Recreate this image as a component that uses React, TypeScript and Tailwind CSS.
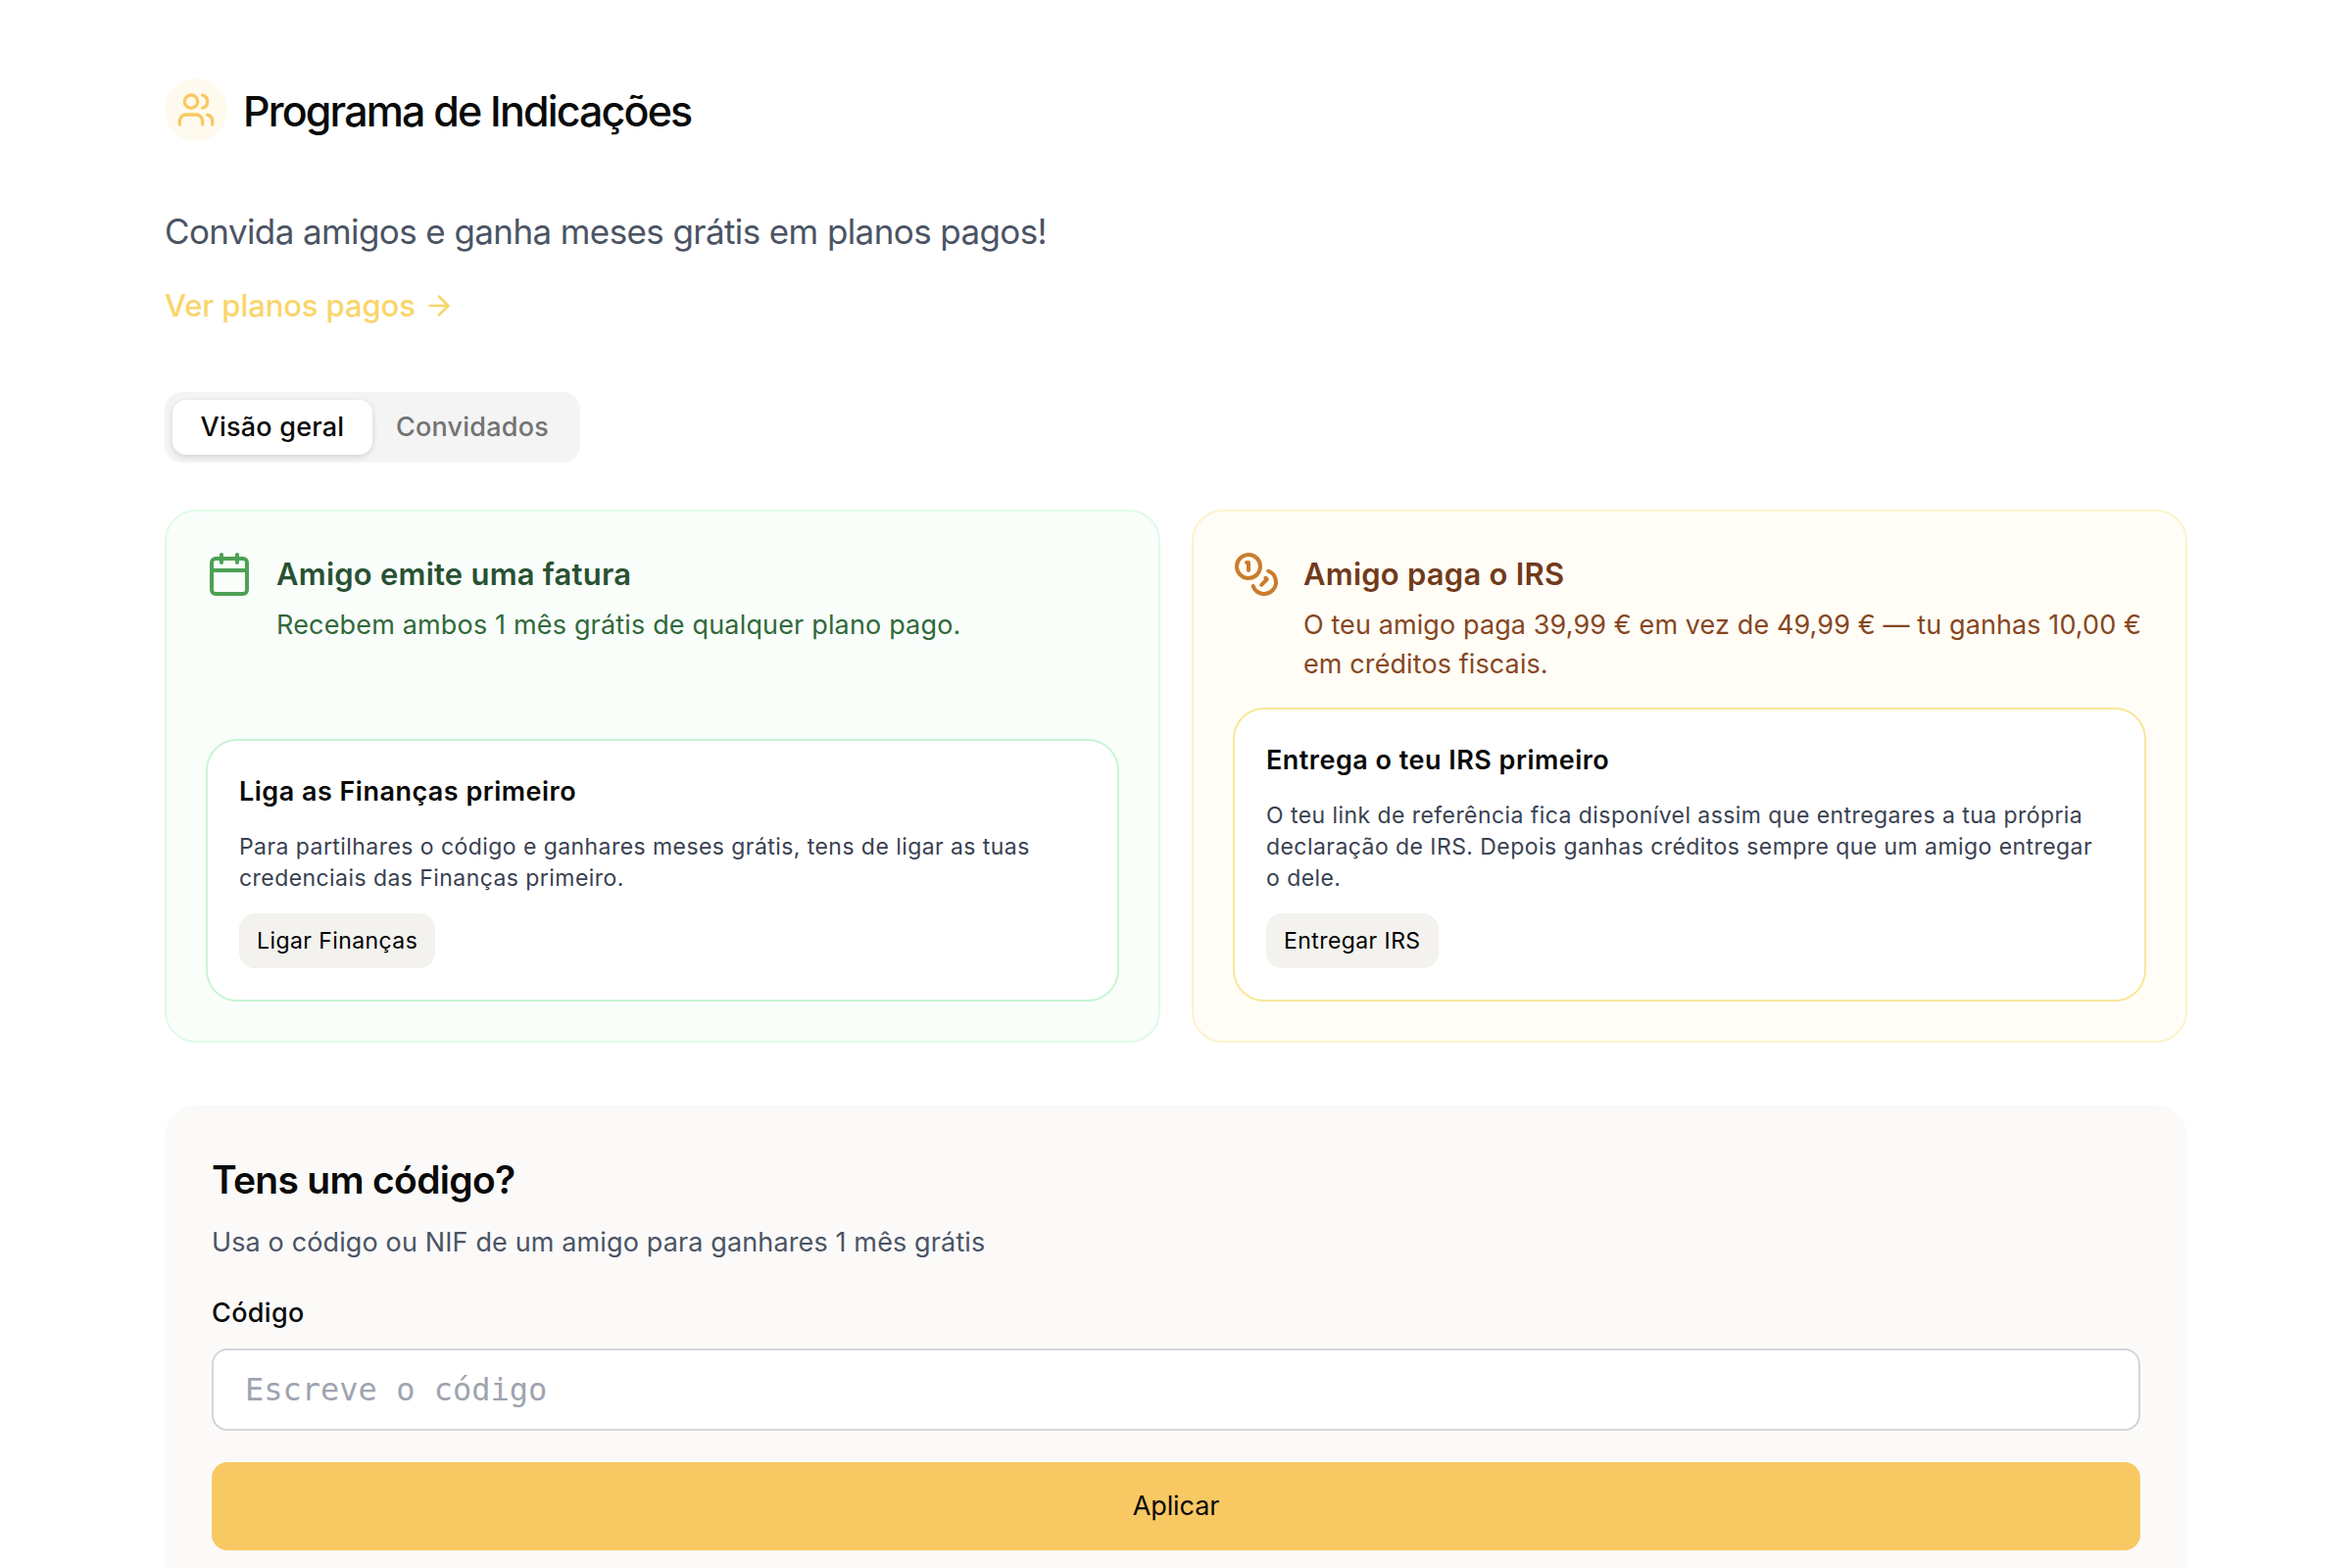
import { clsx } from 'clsx';
import { ArrowRight, Calendar, Coins, Users } from 'lucide-react';
import React, { useState } from 'react';

interface RewardCardProps {
    tone: 'green' | 'yellow';
    icon: React.ReactNode;
    title: string;
    description: string;
    children: React.ReactNode;
}

interface LockedBoxProps {
    tone: 'green' | 'yellow';
    title: string;
    text: string;
    action: string;
}

const tabs = ['Visão geral', 'Convidados'];

const RewardCard = ({ tone, icon, title, description, children }: RewardCardProps) => {
    const green = tone === 'green';

    return (
        <div
            className={clsx(
                'flex flex-col rounded-[32px] border-2 p-10',
                green ? 'border-[#e0fae8] bg-[#f9fefa]' : 'border-[#fcf3cd] bg-[#fffdf6]',
            )}
        >
            <div className="mb-6 flex gap-6">
                {icon}
                <div className="flex-1">
                    <h3
                        className={clsx(
                            'mb-2 text-[31px] leading-[48px] font-semibold tracking-[0.22px]',
                            green ? 'text-[#285132]' : 'text-[#713a1b]',
                        )}
                    >
                        {title}
                    </h3>
                    <p
                        className={clsx(
                            'text-[27px] leading-[40px] whitespace-pre-line',
                            green ? 'tracking-[0.165px] text-[#31693a]' : 'tracking-[0.1px] text-[#87461f]',
                        )}
                    >
                        {description}
                    </p>
                </div>
            </div>
            {children}
        </div>
    );
};

const LockedBox = ({ tone, title, text, action }: LockedBoxProps) => (
    <div
        className={clsx(
            'mt-auto flex flex-col items-start gap-5 rounded-[32px] border-2 bg-white p-8',
            tone === 'green' ? 'border-[#c8f5d3]' : 'border-[#f9e799]',
        )}
    >
        <h4 className="text-[27px] leading-[40px] font-semibold tracking-[0.48px] text-[#0a0a0a]">{title}</h4>
        <p className="text-[23px] leading-[32px] tracking-[0.435px] whitespace-pre-line text-[#394151]">{text}</p>
        <button className="h-14 cursor-pointer rounded-2xl bg-[#f3f2ee] px-[18px] text-[23px] tracking-[0.42px] text-black">
            {action}
        </button>
    </div>
);

const App = () => {
    const [tab, setTab] = useState(tabs[0]);
    const [code, setCode] = useState('');

    return (
        <div className="h-[1600px] overflow-hidden bg-white px-[168px] pt-20 font-['Inter',sans-serif] text-[#0a0a0a]">
            {/* Cabeçalho */}
            <div className="flex items-center gap-4">
                <div className="flex size-16 items-center justify-center rounded-full bg-[#fffaee]">
                    <Users className="size-10 text-[#f8c963]" />
                </div>
                <h1 className="mt-0.5 text-[43px] leading-[62px] font-medium tracking-[-1.85px]">Programa de Indicações</h1>
            </div>

            <p className="mt-16 text-[35px] leading-[56px] tracking-[-0.6px] text-[#4b5464]">
                Convida amigos e ganha meses grátis em planos pagos!
            </p>
            <a href="#" className="mt-6 flex w-fit items-center gap-2 text-[31px] leading-[48px] font-medium tracking-[-0.1px] text-[#f9d56a]">
                Ver planos pagos
                <ArrowRight className="size-8" />
            </a>

            {/* Separadores */}
            <div className="mt-16 grid h-[72px] w-[424px] grid-cols-2 rounded-[18px] bg-[#f4f4f4] p-2">
                {tabs.map((name) => (
                    <button
                        key={name}
                        onClick={() => setTab(name)}
                        className={clsx(
                            'cursor-pointer rounded-[14px] text-[27px] font-medium tracking-[0.22px]',
                            tab === name ? 'bg-white text-[#0a0a0a] shadow-[0_2px_6px_rgba(0,0,0,0.14)]' : 'text-[#737373]',
                        )}
                    >
                        {name}
                    </button>
                ))}
            </div>

            <div className="mt-12 grid h-[544px] grid-cols-2 gap-8">
                <RewardCard
                    tone="green"
                    icon={<Calendar className="size-12 text-[#4ca154]" />}
                    title="Amigo emite uma fatura"
                    description="Recebem ambos 1 mês grátis de qualquer plano pago."
                >
                    <LockedBox
                        tone="green"
                        title="Liga as Finanças primeiro"
                        text={'Para partilhares o código e ganhares meses grátis, tens de ligar as tuas\ncredenciais das Finanças primeiro.'}
                        action="Ligar Finanças"
                    />
                </RewardCard>
                <RewardCard
                    tone="yellow"
                    icon={<Coins className="size-12 text-[#ca7c2d]" />}
                    title="Amigo paga o IRS"
                    description={'O teu amigo paga 39,99 € em vez de 49,99 € — tu ganhas 10,00 €\nem créditos fiscais.'}
                >
                    <LockedBox
                        tone="yellow"
                        title="Entrega o teu IRS primeiro"
                        text={
                            'O teu link de referência fica disponível assim que entregares a tua própria\ndeclaração de IRS. Depois ganhas créditos sempre que um amigo entregar\no dele.'
                        }
                        action="Entregar IRS"
                    />
                </RewardCard>
            </div>

            {/* Formulário do código */}
            <div className="mt-16 rounded-[32px] bg-[#fbfaf9] p-12">
                <h2 className="text-[39px] leading-[56px] font-semibold tracking-[-0.7px]">Tens um código?</h2>
                <p className="mt-4 text-[27px] leading-[40px] tracking-[0.13px] text-[#4b5464]">
                    Usa o código ou NIF de um amigo para ganhares 1 mês grátis
                </p>
                <label htmlFor="codigo" className="mt-8 block text-[27px] leading-[40px] font-medium tracking-[0.33px]">
                    Código
                </label>
                <input
                    id="codigo"
                    value={code}
                    onChange={(e) => setCode(e.target.value)}
                    placeholder="Escreve o código"
                    className="mt-4 block h-[84px] w-full rounded-2xl border-2 border-[#d2d5dc] bg-white px-8 font-['DejaVu_Sans_Mono',monospace] text-[32px] placeholder:text-[#9fa4b0]"
                />
                <button className="mt-8 block h-[90px] w-full cursor-pointer rounded-2xl bg-[#f8c963] text-[27px] tracking-[-0.1px]">
                    Aplicar
                </button>
            </div>
        </div>
    );
};

export default App;
